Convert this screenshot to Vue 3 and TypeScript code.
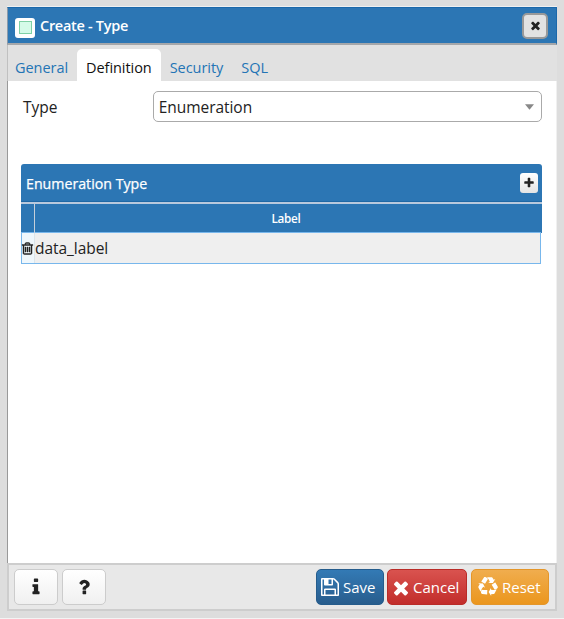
<script setup lang="ts">
import { ref } from 'vue'

const tabs = ['General', 'Definition', 'Security', 'SQL']
const active = ref('Definition')

const icons = {
  times: 'M1490 1322q0 40-28 68l-136 136q-28 28-68 28t-68-28l-294-294-294 294q-28 28-68 28t-68-28l-136-136q-28-28-28-68t28-68l294-294-294-294q-28-28-28-68t28-68l136-136q28-28 68-28t68 28l294 294 294-294q28-28 68-28t68 28l136 136q28 28 28 68t-28 68l-294 294 294 294q28 28 28 68z',
  plus: 'M1600 736v192q0 40-28 68t-68 28h-416v416q0 40-28 68t-68 28h-192q-40 0-68-28t-28-68v-416h-416q-40 0-68-28t-28-68v-192q0-40 28-68t68-28h416v-416q0-40 28-68t68-28h192q40 0 68 28t28 68v416h416q40 0 68 28t28 68z',
  save: 'M512 1536h768v-384h-768v384zm896 0h128v-896q0-14-10-38.5t-20-34.5l-281-281q-10-10-34-20t-39-10v416q0 40-28 68t-68 28h-576q-40 0-68-28t-28-68v-416h-128v1280h128v-416q0-40 28-68t68-28h832q40 0 68 28t28 68v416zm-384-928v-320q0-13-9.5-22.5t-22.5-9.5h-192q-13 0-22.5 9.5t-9.5 22.5v320q0 13 9.5 22.5t22.5 9.5h192q13 0 22.5-9.5t9.5-22.5zm640 32v928q0 40-28 68t-68 28h-1344q-40 0-68-28t-28-68v-1344q0-40 28-68t68-28h928q40 0 88 20t76 48l280 280q28 28 48 76t20 88z',
  trash: 'M704 736v576q0 14-9 23t-23 9h-64q-14 0-23-9t-9-23v-576q0-14 9-23t23-9h64q14 0 23 9t9 23zm256 0v576q0 14-9 23t-23 9h-64q-14 0-23-9t-9-23v-576q0-14 9-23t23-9h64q14 0 23 9t9 23zm256 0v576q0 14-9 23t-23 9h-64q-14 0-23-9t-9-23v-576q0-14 9-23t23-9h64q14 0 23 9t9 23zm128 724v-948h-896v948q0 22 7 40.5t14.5 27 10.5 8.5h832q3 0 10.5-8.5t14.5-27 7-40.5zm-672-1076h448l-48-117q-7-9-17-11h-317q-10 2-17 11zm928 32v64q0 14-9 23t-23 9h-96v948q0 83-47 143.5t-113 60.5h-832q-66 0-113-58.5t-47-141.5v-952h-96q-14 0-23-9t-9-23v-64q0-14 9-23t23-9h309l70-167q15-37 54-63t79-26h320q40 0 79 26t54 63l70 167h309q14 0 23 9t9 23z',
  info: 'M1216 1344v128q0 26-19 45t-45 19h-512q-26 0-45-19t-19-45v-128q0-26 19-45t45-19h64v-384h-64q-26 0-45-19t-19-45v-128q0-26 19-45t45-19h384q26 0 45 19t19 45v576h64q26 0 45 19t19 45zm-128-1152v192q0 26-19 45t-45 19h-256q-26 0-45-19t-19-45v-192q0-26 19-45t45-19h256q26 0 45 19t19 45z',
  question: 'M1088 1256v240q0 16-12 28t-28 12h-240q-16 0-28-12t-12-28v-240q0-16 12-28t28-12h240q16 0 28 12t12 28zm316-600q0 54-15.5 101t-35 76.5-55 59.5-57.5 43.5-61 35.5q-41 23-68.5 65t-27.5 67q0 17-12 32.5t-28 15.5h-240q-15 0-25.5-18.5t-10.5-37.5v-45q0-83 65-156.5t143-108.5q59-27 84-56t25-76q0-42-46.5-74t-107.5-32q-65 0-108 29-35 25-107 115-13 16-31 16-12 0-25-8l-164-125q-13-10-15.5-25t5.5-28q160-266 464-266 80 0 161 31t146 83 106 127.5 41 158.5z',
  recycle: 'M836 1169l-15 368-2 22-420-29q-36-3-67-31.5t-47-65.5q-11-27-14.5-55t4-65 12-55 21.5-64 19-53q78 12 509 28zm-387-586l180 379-147-92q-63 72-111.5 144.5t-72.5 125-39.5 94.5-18.5 63l-4 21-190-357q-17-26-18-56t6-47l8-18q35-63 114-188l-140-86zm1231 517l-188 359q-12 29-36.5 46.5t-43.5 20.5l-18 4q-71 7-219 12l8 164-230-367 211-362 7 173q170 16 283 5t170-33zm-785-924q-47 63-265 435l-317-187-19-12 225-356q20-31 60-45t80-10q24 2 48.5 12t42 21 41.5 33 36 34.5 36 39.5 32 35zm655 307l212 363q18 37 12.5 76t-27.5 74q-13 20-33 37t-38 28-48.5 22-47 16-51.5 14-46 12q-34-72-265-436l313-195zm-143-226l142-83-220 373-419-20 151-86q-34-89-75-166t-75.5-123.5-64.5-80-47-46.5l-17-13 405 1q31-3 58 10.5t39 28.5l11 15q39 61 112 190z',
}
</script>

<template>
  <div class="screen">
    <div class="dialog">
      <header class="titlebar">
        <span class="type-icon"><span class="type-square"></span></span>
        <h1 class="title">Create - Type</h1>
        <button class="close">
          <svg class="i-times" viewBox="0 0 1792 1792"><path :d="icons.times" /></svg>
        </button>
      </header>

      <nav class="tabs">
        <button v-for="t in tabs" :key="t" class="tab" :class="{ active: t === active }" @click="active = t">{{ t }}</button>
      </nav>

      <main class="content">
        <div class="field">
          <span class="field-label">Type</span>
          <div class="select">
            <span class="select-value">Enumeration</span>
            <svg class="caret" viewBox="0 0 8 5"><path d="M0 0h8L4 5z" /></svg>
          </div>
        </div>

        <section class="grid">
          <div class="grid-title">
            <span class="grid-name">Enumeration Type</span>
            <button class="add">
              <svg class="i-plus" viewBox="0 0 1792 1792"><path :d="icons.plus" /></svg>
            </button>
          </div>
          <div class="grid-head">
            <span class="head-tool"></span>
            <span class="head-label">Label</span>
          </div>
          <div class="grid-row">
            <span class="row-tool">
              <svg class="i-trash" viewBox="192 128 1408 1536"><path :d="icons.trash" /></svg>
            </span>
            <span class="row-label">data_label</span>
          </div>
        </section>
      </main>

      <footer class="footer">
        <button class="btn plain">
          <svg class="i-dark" viewBox="0 0 1792 1792"><path :d="icons.info" /></svg>
        </button>
        <button class="btn plain">
          <svg class="i-dark" viewBox="0 0 1792 1792"><path :d="icons.question" /></svg>
        </button>
        <span class="spacer"></span>
        <button class="btn save">
          <svg class="i-save" viewBox="128 128 1536 1536"><path :d="icons.save" /></svg>
          <span>Save</span>
        </button>
        <button class="btn cancel">
          <svg class="i-cancel" viewBox="302 238 1188 1188"><path :d="icons.times" /></svg>
          <span>Cancel</span>
        </button>
        <button class="btn reset">
          <svg class="i-reset" viewBox="0 0 1792 1792"><path :d="icons.recycle" /></svg>
          <span>Reset</span>
        </button>
      </footer>
    </div>
  </div>
</template>

<style>
body {
  margin: 0;
  background: #dddddd;
}
</style>

<style scoped>
* {
  box-sizing: border-box;
}
.screen {
  width: 564px;
  height: 619px;
  padding: 6px 7px 8px;
  background: #dddddd;
  border-bottom: 1px solid #f4f4f4;
  font-family: 'Open Sans', 'Noto Sans', sans-serif;
  font-size: 15.5px;
  color: #222;
}
button {
  font: inherit;
  margin: 0;
  padding: 0;
  border: 0;
}
svg {
  display: block;
  fill: currentColor;
  flex: none;
  overflow: visible;
}
.dialog {
  width: 550px;
  height: 605px;
  display: flex;
  flex-direction: column;
  border-top: 1px solid #f0f0f0;
}
.titlebar {
  height: 38px;
  flex: none;
  display: flex;
  align-items: center;
  padding: 0 8px 0 7px;
  background: #2c76b4;
  border: 1px solid #1b68aa;
  border-left-color: #8a9aaa;
  border-bottom: 2px solid #a5a7aa;
}
.type-icon {
  width: 20px;
  height: 20px;
  margin-top: 4px;
  background: #fff;
  border-radius: 3px;
  display: flex;
  align-items: center;
  justify-content: center;
}
.type-square {
  width: 13px;
  height: 13px;
  background: #d5fbe8;
  border: 1px solid #7fd1a5;
}
.title {
  flex: 1;
  margin: 0 0 0 5px;
  font-size: 14.5px;
  line-height: 20px;
  font-weight: 600;
  letter-spacing: -0.3px;
  color: #fff;
}
.close {
  width: 26px;
  height: 26px;
  background: #e2e2e2;
  border: 2px solid #999;
  border-radius: 5px;
  display: flex;
  align-items: center;
  justify-content: center;
  color: #222;
}
.i-times {
  width: 13px;
  height: 13px;
}
.tabs {
  height: 36px;
  flex: none;
  display: flex;
  align-items: flex-end;
  background: #e1e1e1;
  border-left: 1px solid #c0c0c0;
}
.tab {
  height: 32px;
  padding: 0 9px;
  background: transparent;
  color: #2374b5;
  font-size: 14.5px;
  line-height: 37px;
  letter-spacing: -0.05px;
  border-radius: 5px 5px 0 0;
}
.tab:first-child {
  padding-left: 7px;
}
.tab.active {
  background: #fff;
  color: #111;
}
.content {
  flex: 1;
  background: #fff;
  border-left: 1px solid #999;
  border-right: 1px solid #f0f0f0;
  padding: 10px 14px 0 13px;
}
.field {
  display: flex;
  align-items: center;
  height: 31px;
}
.field-label {
  width: 132px;
  padding: 2px 0 0 2px;
  line-height: 31px;
}
.select {
  width: 390px;
  height: 31px;
  display: flex;
  align-items: center;
  justify-content: space-between;
  padding: 0 7px 0 5px;
  border: 1px solid #aaa;
  border-radius: 5px;
}
.select-value {
  padding-top: 1px;
  letter-spacing: -0.05px;
}
.caret {
  width: 9px;
  height: 6px;
  color: #888;
}
.grid {
  margin-top: 42px;
  width: 521px;
}
.grid-title {
  height: 38px;
  display: flex;
  align-items: center;
  justify-content: space-between;
  padding: 0 4px 0 5px;
  background: #2c76b4;
  color: #fff;
  font-size: 14.2px;
  font-weight: 500;
  border-radius: 3px 3px 0 0;
  border-bottom: 1px solid #1f68a5;
}
.grid-name {
  padding-top: 2px;
  -webkit-text-stroke: 0.25px #fff;
}
.add {
  width: 18px;
  height: 20px;
  border-radius: 3px;
  background: linear-gradient(#fff, #e4e4e4);
  color: #222;
  display: flex;
  align-items: center;
  justify-content: center;
}
.i-plus {
  width: 12px;
  height: 12px;
}
.grid-head {
  height: 31px;
  display: flex;
  border-top: 2px solid #b9c9dd;
  background: #2c76b4;
  color: #fff;
}
.head-tool {
  width: 14px;
  border-right: 1px solid #c5cfda;
}
.head-label {
  flex: 1;
  padding-right: 5px;
  text-align: center;
  font-size: 11.7px;
  font-weight: 600;
  letter-spacing: -0.3px;
  line-height: 28px;
}
.grid-row {
  width: 520px;
  height: 32px;
  margin-top: -1px;
  display: flex;
  background: #efefef;
  border: 1px solid #78b7ec;
}
.row-tool {
  width: 13px;
  display: flex;
  align-items: center;
  background: #eff7fc;
  border-right: 1px solid #dbe5ea;
}
.i-trash {
  width: 11px;
  height: 13px;
  stroke: currentColor;
  stroke-width: 60;
}
.row-label {
  line-height: 31px;
  letter-spacing: -0.05px;
}
.footer {
  height: 48px;
  flex: none;
  display: flex;
  align-items: flex-start;
  padding: 4px 6px 0 5px;
  background: #e8e8e8;
  border: 2px solid #cdcdcd;
}
.btn {
  height: 36px;
  display: flex;
  align-items: center;
  border-radius: 5px;
  color: #fff;
  font-size: 15px;
}
.plain {
  width: 44px;
  justify-content: center;
  margin-right: 4px;
  color: #222;
  background: linear-gradient(#fff, #f0f0f0);
  border: 1px solid #ccc;
}
.i-dark {
  width: 20px;
  height: 20px;
}
.spacer {
  flex: 1;
}
.save {
  width: 68px;
  padding-left: 4px;
  gap: 4px;
  background: linear-gradient(#337ab5, #285d8d);
  border: 1px solid #255c8c;
}
.i-save {
  width: 18px;
  height: 18px;
}
.cancel {
  width: 80px;
  margin-left: 3px;
  padding-left: 6px;
  gap: 5px;
  background: linear-gradient(#d9534f, #c22d2b);
  border: 1px solid #b92c28;
}
.i-cancel {
  width: 14px;
  height: 14px;
}
.reset {
  width: 78px;
  margin-left: 4px;
  padding-left: 6px;
  gap: 4px;
  background: linear-gradient(#f0ad4e, #eb961d);
  border: 1px solid #e4962a;
}
.i-reset {
  width: 20px;
  height: 20px;
}
</style>
